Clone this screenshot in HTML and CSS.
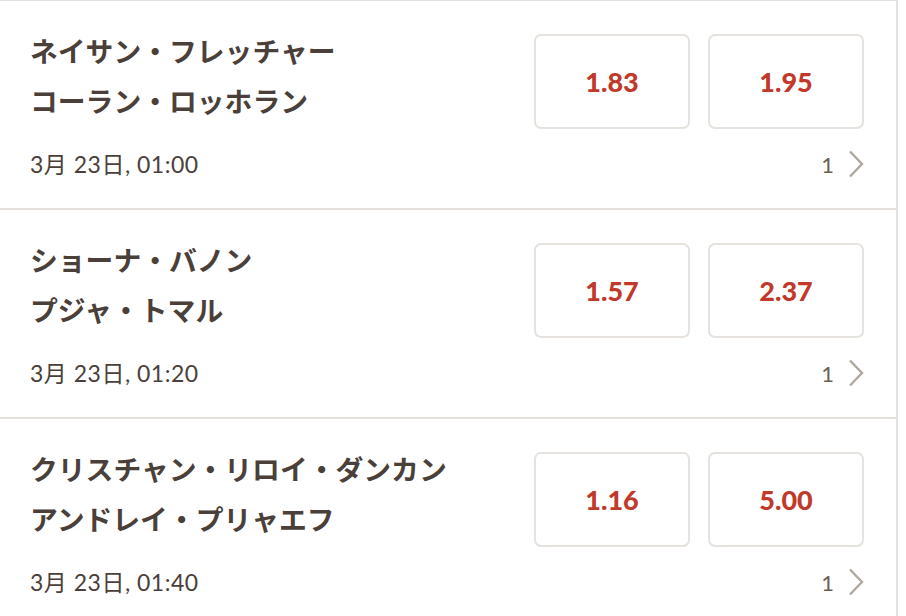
FILE: index.html
```html
<!DOCTYPE html>
<html lang="ja">
  <head>
    <meta charset="UTF-8" />
    <meta name="viewport" content="width=device-width, initial-scale=1.0" />
    <title>試合一覧</title>
    <link rel="stylesheet" href="styles.css">
  </head>
  <body>
    <main class="events">
      <section class="event">
        <div class="names">
          <p>ネイサン・フレッチャー</p>
          <p>コーラン・ロッホラン</p>
        </div>
        <div class="odds">
          <button class="odd">1.83</button>
          <button class="odd">1.95</button>
        </div>
        <p class="date">3月 23日, 01:00</p>
        <a class="more" href="#">1 <svg width="16" height="28" viewBox="0 0 16 28"><path d="M2 1.5 L14 14 L2 26.5" /></svg></a>
      </section>
      <section class="event">
        <div class="names">
          <p>ショーナ・バノン</p>
          <p>プジャ・トマル</p>
        </div>
        <div class="odds">
          <button class="odd">1.57</button>
          <button class="odd">2.37</button>
        </div>
        <p class="date">3月 23日, 01:20</p>
        <a class="more" href="#">1 <svg width="16" height="28" viewBox="0 0 16 28"><path d="M2 1.5 L14 14 L2 26.5" /></svg></a>
      </section>
      <section class="event">
        <div class="names">
          <p>クリスチャン・リロイ・ダンカン</p>
          <p>アンドレイ・プリャエフ</p>
        </div>
        <div class="odds">
          <button class="odd">1.16</button>
          <button class="odd">5.00</button>
        </div>
        <p class="date">3月 23日, 01:40</p>
        <a class="more" href="#">1 <svg width="16" height="28" viewBox="0 0 16 28"><path d="M2 1.5 L14 14 L2 26.5" /></svg></a>
      </section>
    </main>
  </body>
</html>
```

FILE: styles.css
```css
body {
  margin: 0;
  background: #fff;
  font-family: Lato, "Noto Sans CJK JP", sans-serif;
  color: #4a4039;
}
.events {
  width: 896px;
  border-top: 1px solid #e4e0dc;
  border-right: 2px solid #e4e0dc;
}
.event {
  display: grid;
  grid-template-columns: 1fr auto;
  grid-template-rows: auto auto;
  column-gap: 20px;
  row-gap: 20px;
  padding: 24px 32px 31px 30px;
  border-bottom: 2px solid #e4e0dc;
  height: 209px;
  box-sizing: border-box;
}
.event p {
  margin: 0;
}
.names {
  font-family: "Noto Sans CJK JP", sans-serif;
  font-weight: 700;
  font-size: 27.8px;
  line-height: 50px;
}
.odds {
  display: flex;
  gap: 18px;
  margin-top: 9px;
}
.odd {
  width: 156px;
  height: 95px;
  border: 2px solid #e6e2de;
  border-radius: 7px;
  background: #fff;
  font-family: Lato, sans-serif;
  font-weight: 900;
  font-size: 27px;
  color: #c0392b;
  padding: 0;
}
.date {
  font-size: 23px;
  letter-spacing: 0.5px;
  line-height: 30px;
  align-self: center;
}
.more {
  display: flex;
  align-items: center;
  justify-content: flex-end;
  gap: 14px;
  font-size: 22px;
  color: #6a5f56;
  text-decoration: none;
}
.more svg {
  fill: none;
  stroke: #b0a89f;
  stroke-width: 2.4;
}
```
